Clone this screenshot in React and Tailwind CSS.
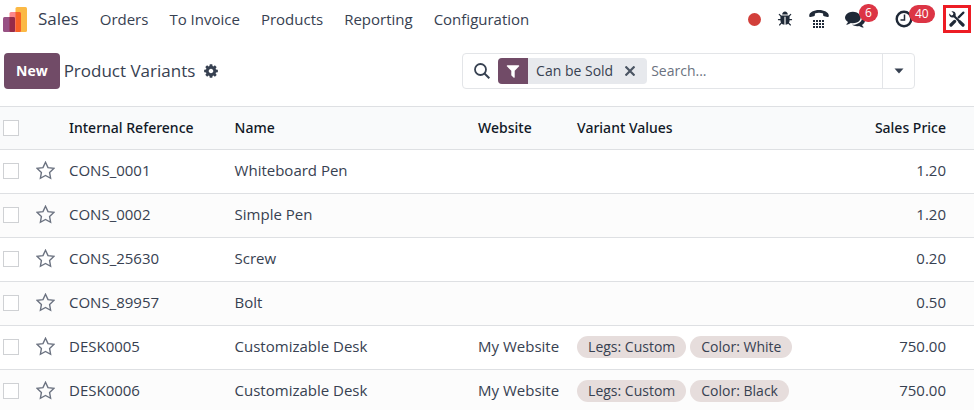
import React from "react";

const menus = ["Orders", "To Invoice", "Products", "Reporting", "Configuration"];

const products = [
  { ref: "CONS_0001", name: "Whiteboard Pen", website: "", values: [], price: "1.20" },
  { ref: "CONS_0002", name: "Simple Pen", website: "", values: [], price: "1.20" },
  { ref: "CONS_25630", name: "Screw", website: "", values: [], price: "0.20" },
  { ref: "CONS_89957", name: "Bolt", website: "", values: [], price: "0.50" },
  {
    ref: "DESK0005",
    name: "Customizable Desk",
    website: "My Website",
    values: ["Legs: Custom", "Color: White"],
    price: "750.00",
  },
  {
    ref: "DESK0006",
    name: "Customizable Desk",
    website: "My Website",
    values: ["Legs: Custom", "Color: Black"],
    price: "750.00",
  },
];

function SalesLogo() {
  return (
    <svg viewBox="0 0 24 25" className="w-6 h-[25px]" aria-hidden="true">
      <rect x="12.5" y="0" width="11.5" height="25" rx="1.5" fill="#fbb945" />
      <rect x="6.5" y="5" width="11.5" height="20" rx="1.5" fill="#fc868b" />
      <rect x="0" y="10" width="12" height="15" rx="1.5" fill="#985184" />
      <path d="M12.5 5h4a1.5 1.5 0 0 1 1.5 1.5v17a1.5 1.5 0 0 1-1.5 1.5h-4z" fill="#f86126" />
      <path d="M6.5 10h4a1.5 1.5 0 0 1 1.5 1.5v12a1.5 1.5 0 0 1-1.5 1.5H8a1.5 1.5 0 0 1-1.5-1.5z" fill="#962b48" />
    </svg>
  );
}

function BugIcon() {
  return (
    <svg viewBox="0 0 1792 1792" className="w-4 h-4" fill="currentColor" aria-hidden="true">
      <path d="M1696 960q0 26-19 45t-45 19h-224q0 171-67 290l208 209q19 19 19 45t-19 45q-18 19-45 19t-45-19l-198-197q-5 5-15 13t-42 28.5-65 36.5-82 29-97 13v-896h-128v896q-51 0-101.5-13.5t-87-33-66-39-43.5-32.5l-15-14-183 207q-20 21-48 21-24 0-43-16-19-18-20.5-44.5t15.5-46.5l202-227q-58-114-58-274h-224q-26 0-45-19t-19-45 19-45 45-19h224v-294l-173-173q-19-19-19-45t19-45 45-19 45 19l173 173h844l173-173q19-19 45-19t45 19 19 45-19 45l-173 173v294h224q26 0 45 19t19 45zm-480-576h-640q0-133 93.5-226.5t226.5-93.5 226.5 93.5 93.5 226.5z" />
    </svg>
  );
}

function PhoneIcon() {
  return (
    <svg viewBox="0 0 20 18" className="w-5 h-[18px]" fill="currentColor" aria-hidden="true">
      <path d="M0.2 5.8C0.2 2.2 5 0 10 0s9.8 2.2 9.8 5.8c0 1-.5 1.4-1.4 1.2l-3.2-.8c-.8-.2-1.1-.7-1.1-1.5V3.4C12.8 2.9 11.4 2.7 10 2.7s-2.8.2-4.1.7v1.3c0 .8-.3 1.3-1.1 1.5L1.600 7C.7 7.200.2 6.800.2 5.800z" />
      {[10, 13, 16].map((y) =>
        [4, 7, 10, 13].map((x) => <rect key={`${x}-${y}`} x={x} y={y} width="2" height="2" />)
      )}
    </svg>
  );
}

function CommentsIcon() {
  return (
    <svg viewBox="0 0 1792 1792" className="w-5 h-5" fill="currentColor" aria-hidden="true">
      <path d="M1408 768q0 139-94 257t-256.5 186.5-353.5 68.5q-86 0-176-16-124 88-278 128-36 9-86 16h-3q-11 0-20.5-8t-11.5-21q-1-3-1-6.5t.5-6.5 2-6l2.5-5 3.5-5.5 4-5 4.5-5 4-4.5q5-6 23-25t26-29.5 22.5-29 25-38.5 20.5-44q-124-72-195-177t-71-224q0-139 94-257t256.5-186.5 353.5-68.5 353.5 68.5 256.5 186.5 94 257zm384 256q0 120-71 224.5t-195 176.5q10 24 20.5 44t25 38.5 22.5 29 26 29.5 23 25q1 1 4 4.5t4.5 5 4 5 3.5 5.5l2.5 5 2 6 .5 6.5-1 6.5q-3 14-13 22t-22 7q-50-7-86-16-154-40-278-128-90 16-176 16-271 0-472-132 58 4 88 4 161 0 309-45t264-129q125-92 192-212t67-254q0-77-23-152 129 71 204 178t75 230z" />
    </svg>
  );
}

function ClockIcon() {
  return (
    <svg viewBox="0 0 18 18" className="w-[18px] h-[18px]" fill="none" stroke="currentColor" aria-hidden="true">
      <circle cx="9" cy="9" r="7.3" strokeWidth="2.4" />
      <path d="M9.5 4.5v5.5H5.5" strokeWidth="1.5" />
    </svg>
  );
}

function ToolsIcon() {
  return (
    <svg viewBox="0 0 16 16" className="w-4 h-4" fill="none" stroke="currentColor" aria-hidden="true">
      <path d="M4.8 4.8l5.5 5.5" strokeWidth="2.2" />
      <path d="M10.8 10.8l3.2 3.2" strokeWidth="3.2" strokeLinecap="round" />
      <path d="M2.4.3l2 2-.5 1.6-1.6.5L.3 2.5C-.2 4.7 1.3 6.7 3.5 6.6l1.7-.3 1.4-1.4.1-1.6C6.6 1.2 4.6-.2 2.4.3z" fill="currentColor" stroke="none" />
      <path d="M14.4 1.6L9.6 6.4" strokeWidth="2.2" strokeLinecap="round" />
      <path d="M5.6 10.4l-3.6 3.6" strokeWidth="3.2" strokeLinecap="round" />
    </svg>
  );
}

function GearIcon() {
  return (
    <svg viewBox="0 0 1792 1792" className="w-4 h-4" fill="currentColor" aria-hidden="true">
      <path d="M1152 896q0-106-75-181t-181-75-181 75-75 181 75 181 181 75 181-75 75-181zm512-109v222q0 12-8 23t-20 13l-185 28q-19 54-39 91 35 50 107 138 10 12 10 25t-9 23q-27 37-99 108t-94 71q-12 0-26-9l-138-108q-44 23-91 38-16 136-29 186-7 28-36 28h-222q-14 0-24.5-8.5t-11.5-21.5l-28-184q-49-16-90-37l-141 107q-10 9-25 9-14 0-25-11-126-114-165-168-7-10-7-23 0-12 8-23 15-21 51-66.5t54-70.5q-27-50-41-99l-183-27q-13-2-21-12.5t-8-23.5v-222q0-12 8-23t19-13l186-28q14-46 39-92-40-57-107-138-10-12-10-24 0-10 9-23 26-36 98.5-107.5t94.5-71.5q13 0 26 10l138 107q44-23 91-38 16-136 29-186 7-28 36-28h222q14 0 24.5 8.5t11.5 21.5l28 184q49 16 90 37l142-107q9-9 24-9 13 0 25 10 129 119 165 170 7 8 7 22 0 12-8 23-15 21-51 66.5t-54 70.5q26 50 41 98l183 28q13 2 21 12.5t8 23.5z" />
    </svg>
  );
}

function SearchIcon() {
  return (
    <svg viewBox="0 0 16 16" className="w-4 h-4 shrink-0" fill="none" stroke="currentColor" aria-hidden="true">
      <circle cx="6.5" cy="6.5" r="5.5" strokeWidth="1.8" />
      <path d="M10.5 10.5l4.8 4.8" strokeWidth="2" />
    </svg>
  );
}

function FilterIcon() {
  return (
    <svg viewBox="0 0 1792 1792" className="w-4 h-4" fill="currentColor" aria-hidden="true">
      <path d="M1595 295q17 41-14 70l-493 493v742q0 42-39 59-13 5-25 5-27 0-45-19l-256-256q-19-19-19-45v-486l-493-493q-31-29-14-70 17-39 59-39h1280q42 0 59 39z" />
    </svg>
  );
}

function StarIcon() {
  return (
    <svg viewBox="0 0 19 19" className="w-[19px] h-[19px]" fill="none" stroke="currentColor" aria-hidden="true">
      <path d="M9.5 1.3l2.5 5.3 5.8.8-4.2 4.1 1 5.8-5.1-2.8-5.1 2.8 1-5.8L1.2 7.4l5.8-.8z" strokeWidth="1.4" />
    </svg>
  );
}

function Badge({ children }) {
  return (
    <span className="absolute left-3.5 -top-[5px] h-[18px] px-1.5 rounded-full bg-[#dc3545] text-white text-xs leading-[18px]">
      {children}
    </span>
  );
}

function Checkbox({ label }) {
  return (
    <input
      type="checkbox"
      aria-label={label}
      className="block appearance-none w-4 h-4 border border-[#cfd1d4] bg-white checked:bg-[#714b67]"
    />
  );
}

export default function App() {
  return (
    <div className="h-screen overflow-hidden bg-white text-[#374151] font-['Open_Sans','Noto_Sans',sans-serif] text-[15px]">
      {/* Navbar */}
      <header className="flex items-center justify-between h-[38px] px-[3px]">
        <nav className="flex items-center gap-[21px]">
          <a href="#sales" className="flex items-center gap-[11px] text-[17px]">
            <SalesLogo />
            Sales
          </a>
          {menus.map((menu) => (
            <a key={menu} href="#menu">
              {menu}
            </a>
          ))}
        </nav>
        <div className="flex items-center text-[#1f2937]">
          <span className="w-[13px] h-[13px] mr-4 rounded-full bg-[#d23f3a]" />
          <button aria-label="Debug" className="mr-4">
            <BugIcon />
          </button>
          <button aria-label="Phone" className="mr-4">
            <PhoneIcon />
          </button>
          <button aria-label="Messages" className="relative mr-[30px]">
            <CommentsIcon />
            <Badge>6</Badge>
          </button>
          <button aria-label="Activities" className="relative mr-[30px]">
            <ClockIcon />
            <Badge>40</Badge>
          </button>
          <button aria-label="Studio" className="p-[3px] border-3 border-[#ed1c24]">
            <ToolsIcon />
          </button>
        </div>
      </header>

      {/* Control panel */}
      <div className="flex items-center justify-between h-[68px] pb-0.5 pl-1 pr-[59px]">
        <div className="flex items-center">
          <button className="h-9 px-3 rounded bg-[#714b67] text-white text-sm font-bold">New</button>
          <h1 className="ml-1 text-[17px]">Product Variants</h1>
          <button aria-label="Actions" className="ml-2">
            <GearIcon />
          </button>
        </div>
        <div className="flex items-center w-[46.5vw] h-9 pl-[11px] border border-[#e3e5e8] rounded">
          <SearchIcon />
          <div className="flex items-center shrink-0 h-[26px] ml-2 rounded overflow-hidden bg-[#e7e9ed]">
            <span className="flex items-center justify-center w-[30px] h-full bg-[#714b67] text-white">
              <FilterIcon />
            </span>
            <span className="pl-2 text-sm">Can be Sold</span>
            <button aria-label="Remove" className="px-3">
              <svg viewBox="0 0 10 10" className="w-2.5 h-2.5" stroke="#4b5563" strokeWidth="2.2" aria-hidden="true">
                <path d="M0.5 0.5l9 9M9.5 0.5l-9 9" />
              </svg>
            </button>
          </div>
          <input
            type="text"
            aria-label="Search"
            placeholder="Search..."
            className="flex-1 min-w-0 pl-1 text-sm outline-none placeholder:text-[#6b7280]"
          />
          <button aria-label="Toggle search panel" className="flex items-center justify-center w-8 h-full border-l border-[#e3e5e8]">
            <svg viewBox="0 0 10 6" className="w-2.5 h-1.5" fill="currentColor" aria-hidden="true">
              <path d="M0.5 0.5h9L5 5.5z" />
            </svg>
          </button>
        </div>
      </div>

      {/* Product list */}
      <table className="w-full table-fixed border-t border-[#dee0e3] text-left">
        <colgroup>
          <col className="w-7" />
          <col className="w-[33px]" />
          <col className="w-[17%]" />
          <col className="w-[25%]" />
          <col className="w-[99px]" />
          <col />
          <col className="w-[112px]" />
        </colgroup>
        <thead className="bg-[#f9fafb] text-[#111827] font-['Noto_Sans',sans-serif] text-sm">
          <tr className="h-[43px] border-b border-[#dee0e3]">
            <th className="pl-[3px]">
              <Checkbox label="Select all" />
            </th>
            <th />
            <th className="pl-2 font-medium">Internal Reference</th>
            <th className="pl-2 font-medium">Name</th>
            <th className="pl-2 font-medium">Website</th>
            <th className="pl-2 font-medium">Variant Values</th>
            <th className="pr-7 font-medium text-right">Sales Price</th>
          </tr>
        </thead>
        <tbody>
          {products.map((product) => (
            <tr key={product.ref} className="h-11 border-b border-[#dee0e3] even:bg-[#fcfcfc]">
              <td className="pb-0.5 pl-[3px]">
                <Checkbox label={`Select ${product.ref}`} />
              </td>
              <td className="pb-0.5 pl-2">
                <button aria-label="Favorite" className="block text-[#6b7280]">
                  <StarIcon />
                </button>
              </td>
              <td className="pb-0.5 pl-2">{product.ref}</td>
              <td className="pb-0.5 pl-2">{product.name}</td>
              <td className="pb-0.5 pl-2">{product.website}</td>
              <td className="pb-0.5 pl-2">
                <div className="flex gap-1">
                  {product.values.map((value) => (
                    <span key={value} className="h-[22px] px-[11px] rounded-full bg-[#e6dddc] text-sm leading-[22px] whitespace-nowrap">
                      {value}
                    </span>
                  ))}
                </div>
              </td>
              <td className="pb-0.5 pr-7 text-right">{product.price}</td>
            </tr>
          ))}
        </tbody>
      </table>
    </div>
  );
}
